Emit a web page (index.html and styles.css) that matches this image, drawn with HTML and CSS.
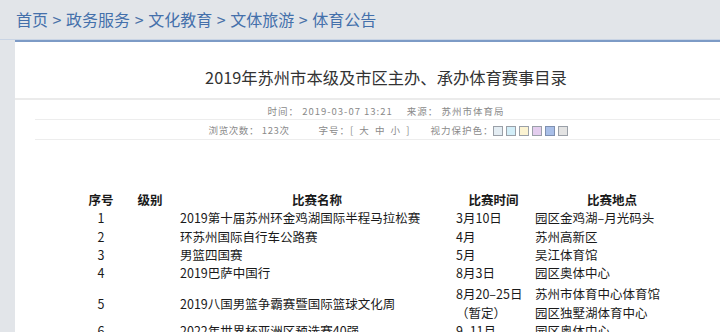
FILE: index.html
```html
<!DOCTYPE html>
<html lang="zh-CN">
<head>
  <meta charset="UTF-8">
  <meta name="viewport" content="width=device-width, initial-scale=1.0">
  <title>2019年苏州市本级及市区主办、承办体育赛事目录</title>
  <link rel="stylesheet" href="styles.css">
</head>
<body>
  <div class="crumb">
    <a href="#">首页</a> &gt; <a href="#">政务服务</a> &gt; <a href="#">文化教育</a> &gt; <a href="#">文体旅游</a> &gt; <a href="#">体育公告</a>
  </div>

  <div class="panel">
    <h1 class="title">2019年苏州市本级及市区主办、承办体育赛事目录</h1>

    <div class="meta">时间： 2019-03-07 13:21<span class="gap"></span>来源： 苏州市体育局</div>
    <div class="meta meta-tools">
      <span class="views">浏览次数： 123次</span>
      <span class="size">字号：[ 大 中 小 ]</span>
      <span class="eye">视力保护色：
        <i class="swatch c1"></i><i class="swatch c2"></i><i class="swatch c3"></i><i class="swatch c4"></i><i class="swatch c5"></i><i class="swatch c6"></i>
      </span>
    </div>

    <table class="events">
      <thead>
        <tr>
          <th class="no">序号</th>
          <th class="lvl">级别</th>
          <th class="name">比赛名称</th>
          <th class="date">比赛时间</th>
          <th class="place">比赛地点</th>
        </tr>
      </thead>
      <tbody>
        <tr>
          <td class="no">1</td><td class="lvl"></td>
          <td class="name">2019第十届苏州环金鸡湖国际半程马拉松赛</td>
          <td class="date">3月10日</td>
          <td class="place">园区金鸡湖–月光码头</td>
        </tr>
        <tr>
          <td class="no">2</td><td class="lvl"></td>
          <td class="name">环苏州国际自行车公路赛</td>
          <td class="date">4月</td>
          <td class="place">苏州高新区</td>
        </tr>
        <tr>
          <td class="no">3</td><td class="lvl"></td>
          <td class="name">男篮四国赛</td>
          <td class="date">5月</td>
          <td class="place">吴江体育馆</td>
        </tr>
        <tr>
          <td class="no">4</td><td class="lvl"></td>
          <td class="name">2019巴萨中国行</td>
          <td class="date">8月3日</td>
          <td class="place">园区奥体中心</td>
        </tr>
        <tr class="tall">
          <td class="no">5</td><td class="lvl"></td>
          <td class="name">2019八国男篮争霸赛暨国际篮球文化周</td>
          <td class="date">8月20–25日<br>（暂定）</td>
          <td class="place">苏州市体育中心体育馆<br>园区独墅湖体育中心</td>
        </tr>
        <tr>
          <td class="no">6</td><td class="lvl"></td>
          <td class="name">2022年世界杯亚洲区预选赛40强</td>
          <td class="date">9–11月</td>
          <td class="place">园区奥体中心</td>
        </tr>
      </tbody>
    </table>
  </div>
</body>
</html>
```

FILE: styles.css
```css
body {
  margin: 0;
  background: #e2e5e9;
  font-family: "Noto Sans CJK SC", "Noto Sans", sans-serif;
  overflow: hidden;
}
.crumb {
  height: 39px;
  line-height: 38px;
  padding-left: 16px;
  font-size: 16px;
  word-spacing: 1px;
  color: #4a72a8;
  border-bottom: 1px solid #c9d4e4;
}
.crumb a {
  color: #4470ab;
  text-decoration: none;
}
.panel {
  margin-left: 15px;
  width: 742px;
  min-height: 400px;
  background: #fff;
  border-top: 2px solid #7d9bc6;
}
.title {
  margin: 0;
  padding: 20px 0 6px;
  line-height: 30px;
  font-size: 16.3px;
  font-weight: normal;
  color: #333;
  text-align: center;
  border-bottom: 2px solid #ebebeb;
}
.meta {
  margin: 0 20px;
  padding-top: 4px;
  line-height: 15px;
  font-size: 9.5px;
  letter-spacing: 1px;
  color: #8a8a8a;
  text-align: center;
  border-bottom: 1px solid #ededed;
}
.meta .gap {
  display: inline-block;
  width: 14px;
}
.meta-tools {
  padding: 3px 0 1px 8px;
  display: flex;
  justify-content: center;
  align-items: center;
}
.views {
  letter-spacing: 0.6px;
  margin-right: 29px;
}
.size {
  word-spacing: 2px;
  margin-right: 20px;
}
.eye {
  display: flex;
  align-items: center;
}
.swatch {
  display: inline-block;
  width: 10px;
  height: 10px;
  margin-right: 3px;
  border: 1px solid #9aa0a8;
  box-sizing: border-box;
}
.c1 { background: #e4edf3; }
.c2 { background: #d3eef8; }
.c3 { background: #fbf3d2; }
.c4 { background: #e3cdee; }
.c5 { background: #a9bfe8; border-color: #7f90b0; }
.c6 { background: #e3e3e3; }
.events {
  margin: 51px 0 0 63px;
  border-collapse: collapse;
  font-size: 12.5px;
  color: #1a1a1a;
}
.events th,
.events td {
  padding: 0;
  line-height: 18.3px;
  vertical-align: middle;
}
.events th {
  font-weight: bold;
  text-align: center;
}
.events .no { width: 46px; text-align: center; }
.events .lvl { width: 52px; }
.events .name { width: 274px; padding-left: 4px; }
.events .date { width: 75px; padding-left: 2px; }
.events .place { width: 154px; padding-left: 4px; }
.events th.name,
.events th.date,
.events th.place { text-align: center; }
.events tr.tall td { padding-top: 3px; }
```
